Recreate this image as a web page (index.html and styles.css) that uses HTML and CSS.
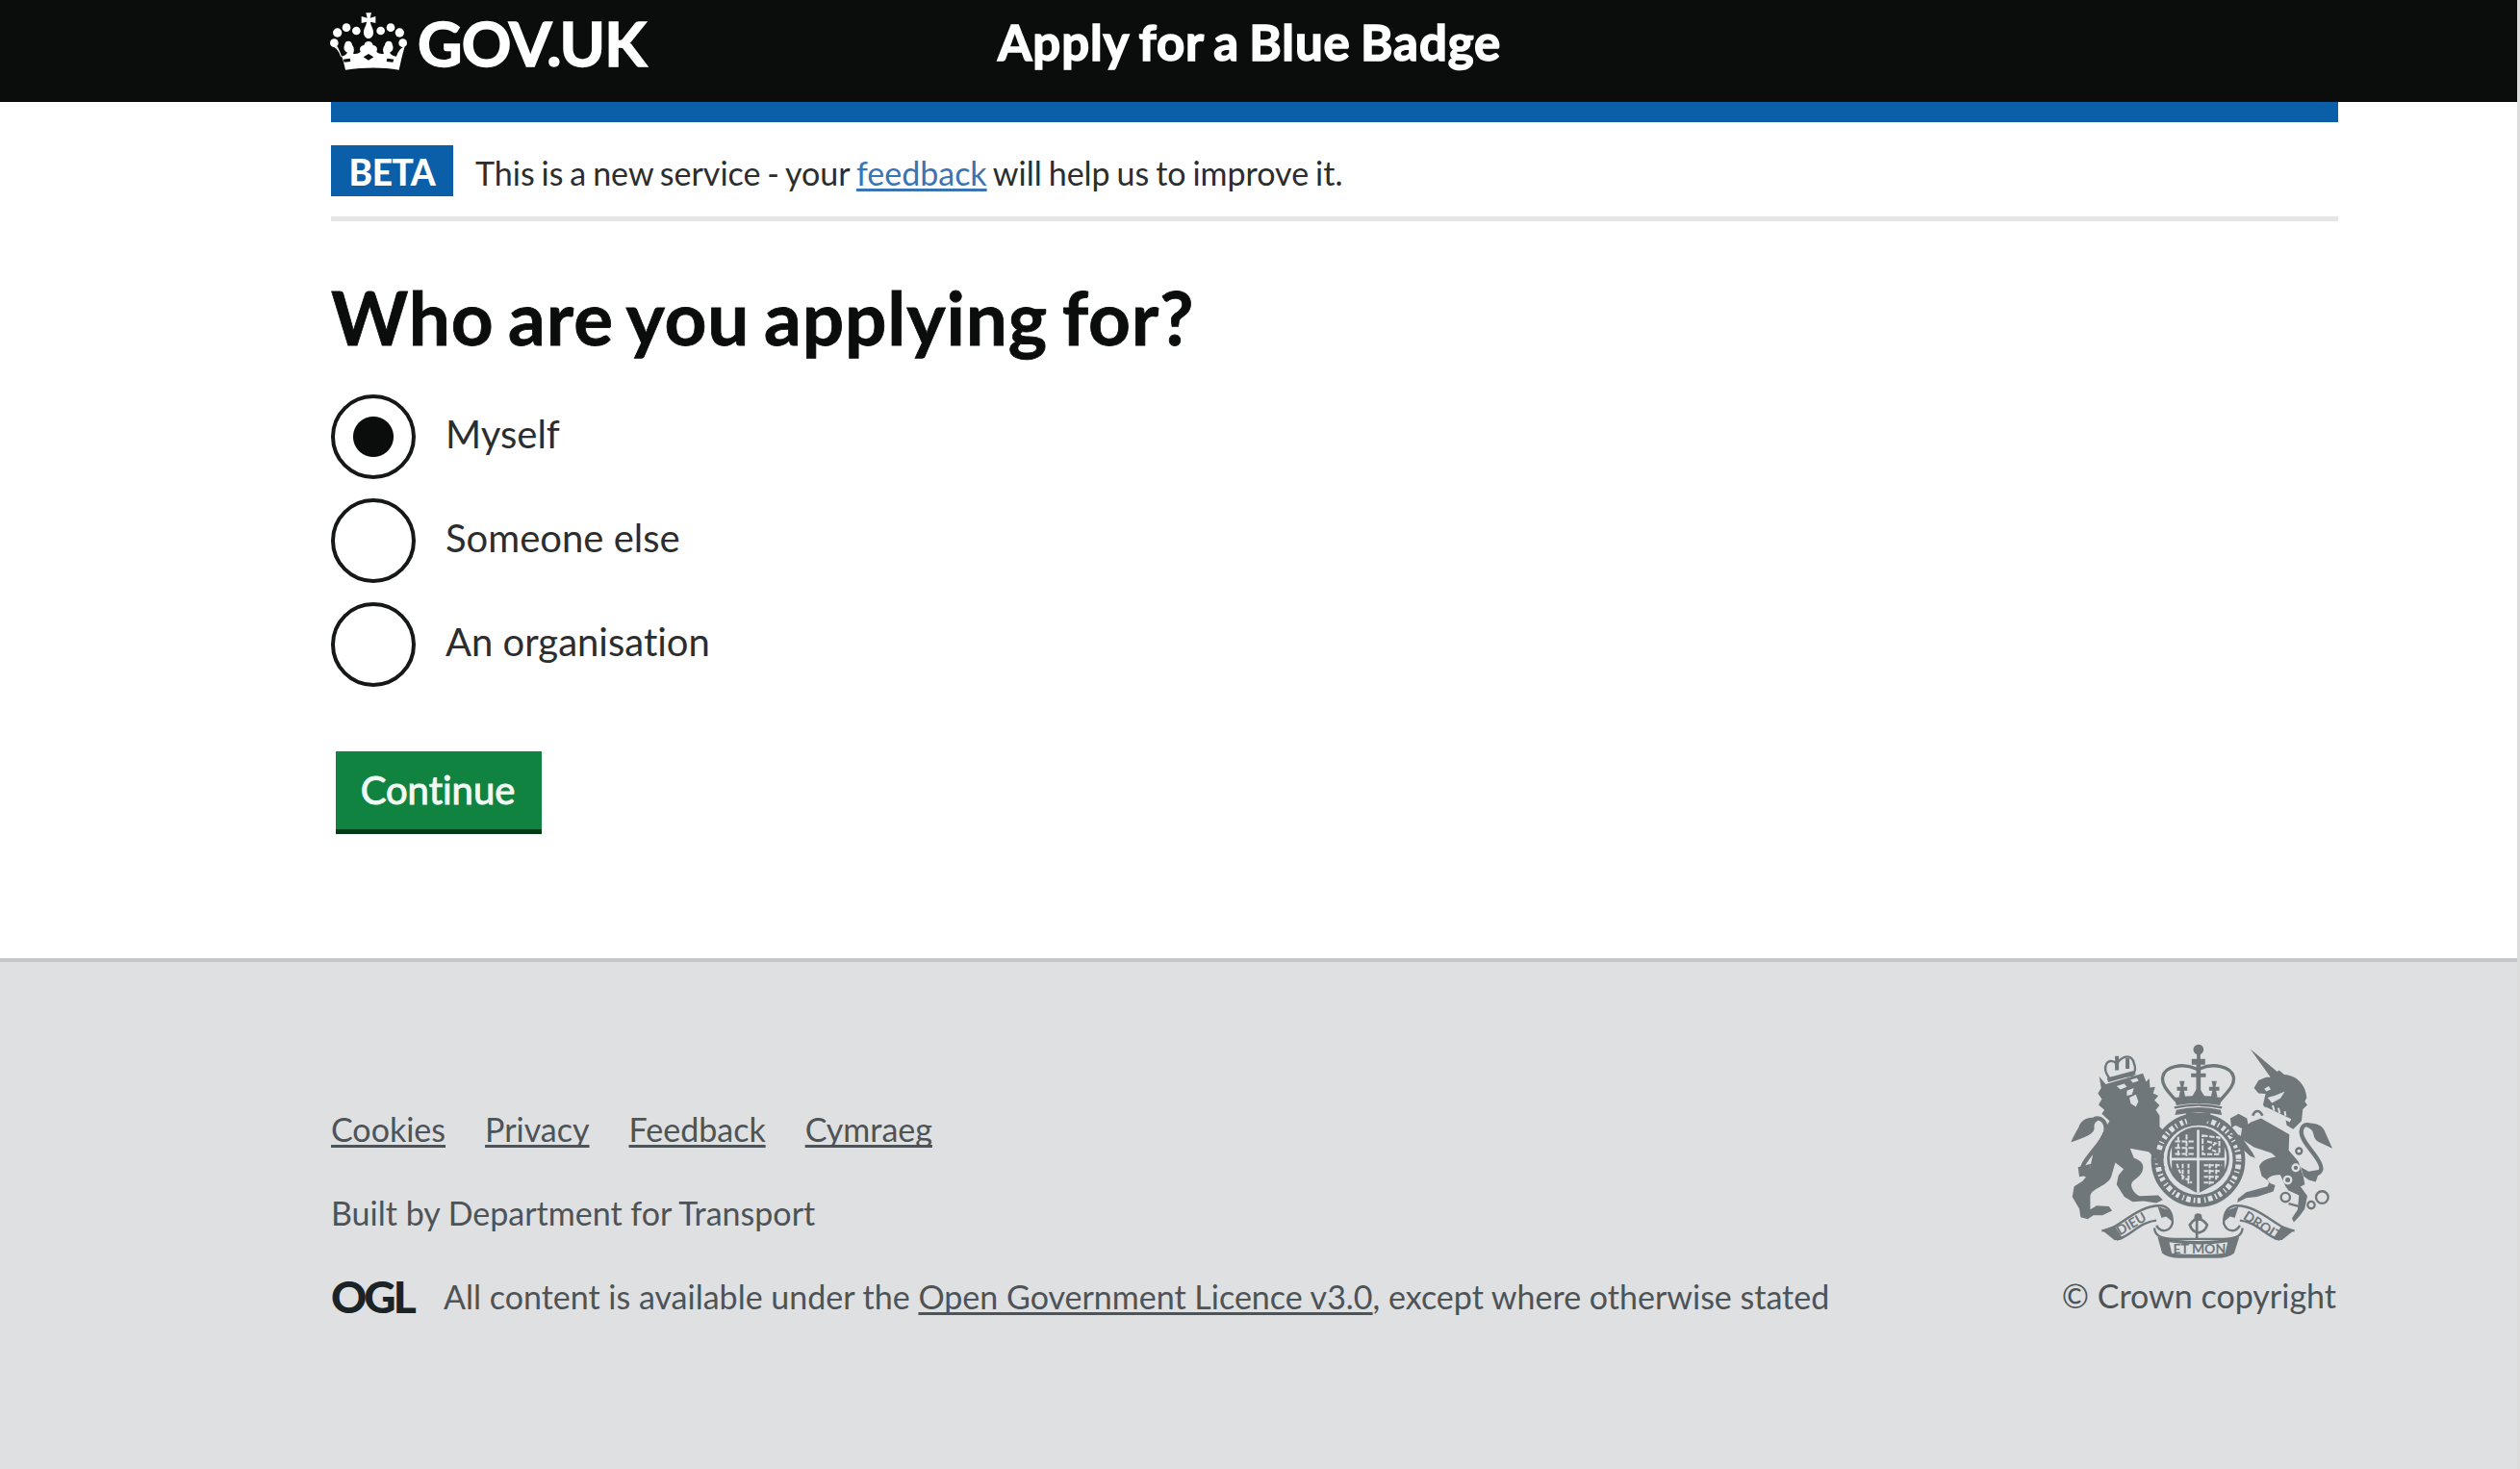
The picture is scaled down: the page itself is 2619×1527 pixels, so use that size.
FILE: index.html
```
<!doctype html>
<html lang="en">
    <head>
        <meta charset="utf-8" />
        <title>Who are you applying for? - Apply for a Blue Badge</title>
        <link rel="stylesheet" href="styles.css">
    </head>
    <body>
        <header class="header">
            <div class="container header-content">
                <a class="header-logo" href="#">
                    <svg class="crown" viewBox="36 32 246 186" fill="#fff" aria-hidden="true">
                        <circle cx="52" cy="130" r="13" />
                        <circle cx="62" cy="98" r="14" />
                        <circle cx="90" cy="82" r="13" />
                        <circle cx="121" cy="92" r="13" />
                        <circle cx="197" cy="92" r="13" />
                        <circle cx="228" cy="82" r="13" />
                        <circle cx="256" cy="98" r="14" />
                        <circle cx="266" cy="130" r="13" />
                        <path d="M151 36h17l-4 16 17-5v21l-16-4c1 13 9 19 9 33 0 10-6 19-15 19s-15-9-15-19c0-14 8-20 9-33l-16 4V47l18 5z" />
                        <path d="M46 141c15 5 21 18 26 31 10-2 17-5 21-12-11-5-13-14-8-25-1-5 3-11 12-11 6 0 11 5 11 12 6 8 8 17 3 27 9 2 17 0 23-6-5-10 0-19 11-20 2-8 6-12 14-12s12 4 14 12c11 1 16 10 11 20 6 6 14 8 23 6-5-10-3-19 3-27 0-7 5-12 11-12 9 0 13 6 12 11 5 11 3 20-8 25 4 7 11 10 21 12 5-13 11-26 26-31-7 24-13 48-18 73-49-9-109-9-167 0-5-25-13-49-25-73zM80 181l3 9 20-2-2-10zM238 181l-3 9-20-2 2-10zM143 174l16-10 16 10-16 10z" fill-rule="evenodd" />
                    </svg>
                    <span>GOV.UK</span>
                </a>
                <a class="header-service" href="#">Apply for a Blue Badge</a>
            </div>
        </header>

        <div class="container main-wrapper">
            <div class="phase-banner">
                <strong class="tag">BETA</strong>
                <span>This is a new service - your <a href="#">feedback</a> will help us to improve it.</span>
            </div>

            <main>
                <h1 class="heading">Who are you applying for?</h1>
                <form>
                    <div class="radios">
                        <label class="radio">
                            <input type="radio" name="applicant" checked />
                            <span>Myself</span>
                        </label>
                        <label class="radio">
                            <input type="radio" name="applicant" />
                            <span>Someone else</span>
                        </label>
                        <label class="radio">
                            <input type="radio" name="applicant" />
                            <span>An organisation</span>
                        </label>
                    </div>
                    <button type="button" class="button">Continue</button>
                </form>
            </main>
        </div>

        <footer class="footer">
            <div class="container footer-content">
                <div class="footer-meta">
                    <nav class="footer-links">
                        <a href="#">Cookies</a>
                        <a href="#">Privacy</a>
                        <a href="#">Feedback</a>
                        <a href="#">Cymraeg</a>
                    </nav>
                    <p>Built by Department for Transport</p>
                    <p class="licence">
                        <strong class="ogl">OGL</strong>
                        <span>All content is available under the <a href="#">Open Government Licence v3.0</a>, except where otherwise stated</span>
                    </p>
                </div>
                <a class="copyright" href="#">
                    <svg class="arms" viewBox="60 40 830 680" fill="#6f777b" stroke="#6f777b" stroke-width="0" aria-hidden="true">
                        <!-- Central crown -->
                        <g fill="none" stroke-width="10">
                            <path d="M398 224C376 198 350 176 356 148c6-32 62-44 104-24 2 2 8 2 10 0 42-20 98-8 106 24 6 28-22 50-42 76" />
                            <path d="M392 245c46-10 104-10 148 0" stroke-width="7" />
                        </g>
                        <circle cx="467" cy="64" r="16" />
                        <path d="M462 50h11v48h-11zM446 93h42v18h-42zM460 110h14v100h-14zM444 138h46v12h-46zM392 214q75-12 148 0l-6 24q-70-12-136 0zM398 252q68-16 138 0l4 16q-72-16-146 0z" />
                        <path d="M408 162h16l-4 18h12v12h-10l4 20h-20l4-20h-10v-12h12zM508 162h16l-4 18h12v12h-10l4 20h-20l4-20h-10v-12h12zM446 212l20-34 22 34z" />

                        <!-- Shield and garter -->
                        <circle cx="466" cy="408" r="126" fill="none" stroke-width="36" />
                        <circle cx="466" cy="408" r="144" fill="none" stroke-width="5" />
                        <circle cx="466" cy="408" r="126" fill="none" stroke="#dee0e2" stroke-width="17" stroke-dasharray="5 9 14 8 4 12 10 7" />
                        <circle cx="466" cy="402" r="93" fill="none" stroke-width="8" />
                        <path d="M384 352c30-38 48-36 82-42 34 6 56 4 82 42v86c-14 36-44 56-82 74-38-18-68-38-82-74z" />
                        <g fill="none" stroke="#dee0e2" stroke-width="6">
                            <path d="M466 314v196M382 405h168" stroke-width="8" />
                            <path d="M394 350h58M394 370h58M394 389h58M404 336v58M430 328v68M480 332l52 6v52h-52zM494 350l26 6-20 16 22 10" stroke-dasharray="16 5" />
                            <path d="M400 420c14 50 30 42 46 60M418 420v50M436 420v62M484 424h56M484 442h52M484 460h46M484 478h34M502 420v64M522 420v50" stroke-dasharray="13 5" />
                        </g>
                        <path d="M428 262h76v20l-18 14h-40l-18-14z" />

                        <!-- Lion -->
                        <path d="M178 172l116-34 10 26 10-10 2 28 16-2-6 20 16 8-12 14 16 16-12 14 12 18 0 34 14 14-14 12-10 42 24 26-8 16 12 18-20-4-8-20-24-26-58-10 12 30c24 8 34 22 26 42-10 22-30 24-34 40 0 16 12 30 26 36l58-2 14 14-20 10-40-6-34 2-26-16-24-38 6-28 16-20-26-20-12 42c-10 32-66 38-66 64l0 40 20-12 38 2 10 14-30 14-28 0-18 12-22-6-4-26-22-38 6-32 26-16 20-24 14-68 32-64 18-32-24-22 8-12-18-16 10-18-12-18 10-16-6-36z" />
                        <path d="M212 178l24-8 8 10-20 8zM244 192l22-8-6 20-16 4zM252 214l20-10 8 22-8 16-16-10zM255 158l20-6 6 9-18 6z" fill="#dee0e2" />
                        <path d="M190 154c-28-38-4-70 22-46 22-30 48-28 54-2 6 14 4 28-4 38z" fill="none" stroke-width="7" />
                        <path d="M207 84h12v44h-12zM240 90h12v34h-12zM182 152l84-22 6 12-86 24z" />
                        <path d="M146 440c-28 18-50 8-38-16 16-34 64-74 70-106 4-30-16-46-36-38" fill="none" stroke-width="13" />
                        <path d="M158 282c-28-14-56-2-64 24-8 14-16 28-24 46 32-10 66-22 72-38 2-14-4-20 16-32zM92 430l40-10-6 46-16-8-14 2z" />

                        <!-- Unicorn -->
                        <path d="M628 62l86 72-20 20z" />
                        <path d="M690 150l10-8 18-14 16 14c40 2 68 34 70 72l-6 12 8 10-14 14-4 36-26 26-20-12-4-20-56-26-14-18 8-34-22-2-14-16 14-24 24-10z" />
                        <path d="M682 214l26-8 28-12-14 22-26 14zM676 242l80 38-5 10-78-40zM672 186l14-8 6 10-14 6z" fill="#dee0e2" />
                        <path d="M698 238l5 16M716 246l4 16M736 256l2 14" stroke="#dee0e2" stroke-width="6" />
                        <path d="M662 278l88 50-2 50 30 34 16 48 4 24-28 14-30-4-18-40c-20 0-34 4-40 14 0 8 8 14 24 18l-6 20-50 16-34 4-28 14 2-12 26-20 66-18 6-14-24-18-8-30c8-20 30-26 52-30l-14-12-54-18-42-28 4-28 28-22z" />
                        <path d="M566 278l26-14 26 14 4 20 34 16-10 24-30-22-34-16-12 8zM558 328l38 2 40 56 8 16-16-6-26-24-12-2-10-28z" />
                        <path d="M736 482l26-14 24 24 20 28-8 40-16 22-18 20-6-12 18-28 4-44-34-16z" />
                        <path d="M636 270c8-22 24-16 30 0" fill="none" stroke-width="8" />
                        <path d="M812 458c44-8 44-24 26-52-18-30-56-64-50-92 4-20 24-20 42-8" fill="none" stroke-width="13" />
                        <path d="M798 300c24-14 56-4 64 22l22 50-38-18c-26-10-16-34-30-42zM786 430l24 14 36-6-14 38-22-6-16-12z" />
                        <g fill="none" stroke-width="7">
                            <circle cx="780" cy="380" r="9" />
                            <circle cx="770" cy="432" r="10" stroke="#dee0e2" />
                            <circle cx="745" cy="470" r="11" stroke="#dee0e2" />
                            <circle cx="738" cy="524" r="14" />
                            <circle cx="852" cy="524" r="19" />
                            <circle cx="818" cy="548" r="11" />
                            <path d="M748 544l30 8" />
                        </g>

                        <!-- Motto ribbon -->
                        <g fill="none" stroke-width="7">
                            <path d="M166 628c50 0 104-78 180-78 28 0 42 22 40 56-10 28-38 28-50 6" />
                            <path d="M766 628c-50 0-104-78-180-78-28 0-42 22-40 56 10 28 38 28 50 6" />
                            <path d="M212 656c46-10 66-54 124-60M720 656c-46-10-66-54-124-60M330 620c0 30 40 34 62 34h152c22 0 60-4 60-34" />
                        </g>
                        <path d="M166 626l40-14 26 42-26 4zM766 626l-40-14-26 42 26 4zM340 552l40 14 6 34-20-16-14 4zM592 552l-40 14-6 34 20-16 14 4z" />
                        <path d="M340 648q126 24 254 0l-16 50q-20 16-60 15h-104q-40 1-60-15z" />
                        <path d="M376 664q90 14 182 0l-8 34q-82 8-166 0z" fill="#dee0e2" />
                        <path d="M462 590v66M440 610q26-38 54 0-6 22-27 24-20-2-27-24z" fill="none" stroke-width="8" />
                        <circle cx="466" cy="586" r="12" />
                        <g class="motto">
                            <text x="222" y="644" transform="rotate(-30 222 644)">DIEU</text>
                            <text x="388" y="700">ET MON</text>
                            <text x="604" y="590" transform="rotate(33 604 590)">DROIT</text>
                        </g>
                    </svg>
                    <span>© Crown copyright</span>
                </a>
            </div>
        </footer>
    </body>
</html>
```
FILE: styles.css
```
* {
    box-sizing: border-box;
}

body {
    margin: 0;
    padding-right: 3px;
    min-height: 1527px;
    display: flex;
    flex-direction: column;
    background: linear-gradient(#dcdcdc, #dcdcdc) right / 3px 100% no-repeat #fff;
    color: #2b2d2e;
    font-family: Lato, "Open Sans", sans-serif;
    font-variant-ligatures: none;
}

.container {
    width: 2086px;
    margin-left: 344px;
}

.header {
    height: 106px;
    background: #0b0c0c;
}

.header-content {
    display: flex;
}

.header a {
    color: #fff;
    font-weight: 700;
    text-decoration: none;
    -webkit-text-stroke: 1.5px #fff;
}

.header-logo {
    display: flex;
    width: 693px;
    font-size: 64px;
    line-height: 90px;
    letter-spacing: -0.8px;
}

.crown {
    width: 82px;
    height: 62px;
    margin: 12px 10px 0 -2px;
}

.header-service {
    font-size: 51px;
    line-height: 88px;
    letter-spacing: 0.9px;
    word-spacing: -3px;
}

.main-wrapper {
    height: 890px;
    border-top: 21px solid #0b5ea8;
}

.phase-banner {
    display: flex;
    align-items: center;
    height: 103px;
    padding-top: 3px;
    border-bottom: 5px solid #e6e6e6;
    font-size: 34px;
    word-spacing: -1.8px;
}

.phase-banner span {
    padding-top: 3px;
}

.phase-banner a {
    color: #3a74b5;
}

.phase-banner a,
.footer a {
    text-decoration-thickness: 3px;
    text-underline-offset: 3px;
    text-decoration-skip-ink: none;
}

.tag {
    width: 127px;
    height: 53px;
    margin-right: 23px;
    background: #0b5ea8;
    color: #fff;
    font-size: 37px;
    font-weight: 900;
    line-height: 55px;
    text-align: center;
    letter-spacing: -0.4px;
}

.heading {
    margin: 53px 0 35px;
    color: #0b0c0c;
    font-size: 76.5px;
    line-height: 92px;
    letter-spacing: 0.9px;
    word-spacing: -5px;
    -webkit-text-stroke: 0.8px #0b0c0c;
}

.radios {
    display: flex;
    flex-direction: column;
    gap: 20px;
}

.radio {
    display: flex;
    align-items: center;
    gap: 31px;
    height: 88px;
    font-size: 40px;
}

.radio span {
    padding-bottom: 7px;
}

.radio input {
    appearance: none;
    width: 88px;
    height: 88px;
    margin: 0;
    border: 4px solid #161818;
    border-radius: 50%;
}

.radio input:checked {
    background: radial-gradient(circle, #0b0c0c 20.5px, transparent 21.5px);
}

.button {
    display: block;
    width: 214px;
    height: 86px;
    margin: 67px 0 0 5px;
    padding: 0 2px 7px 0;
    border: 0;
    background: #118340;
    box-shadow: inset 0 -5px #033c16;
    color: #f2f8f4;
    font: 40px Lato, "Open Sans", sans-serif;
    font-variant-ligatures: none;
    -webkit-text-stroke: 1px #f2f8f4;
}

.footer {
    flex: 1;
    padding-top: 85px;
    border-top: 4px solid #c5c7ca;
    background: #dee0e2;
    color: #4d5356;
    font-size: 34px;
    line-height: 40px;
}

.footer a {
    color: inherit;
}

.footer-content {
    display: flex;
    justify-content: space-between;
}

.footer-meta {
    padding-top: 69px;
}

.footer-links {
    display: flex;
    gap: 41px;
}

.footer-meta p {
    margin: 47px 0 0;
}

.licence {
    display: flex;
    align-items: center;
}

.ogl {
    width: 117px;
    color: #1c2326;
    font-size: 46px;
    font-weight: 900;
    letter-spacing: -3px;
}

.footer .copyright {
    display: flex;
    flex-direction: column;
    align-items: flex-end;
    margin-right: 2px;
    text-decoration: none;
}

.arms {
    width: 277px;
    height: 227px;
    margin: -2px 2px 17px 0;
}

.motto {
    font-size: 42px;
    font-weight: 700;
}
```
